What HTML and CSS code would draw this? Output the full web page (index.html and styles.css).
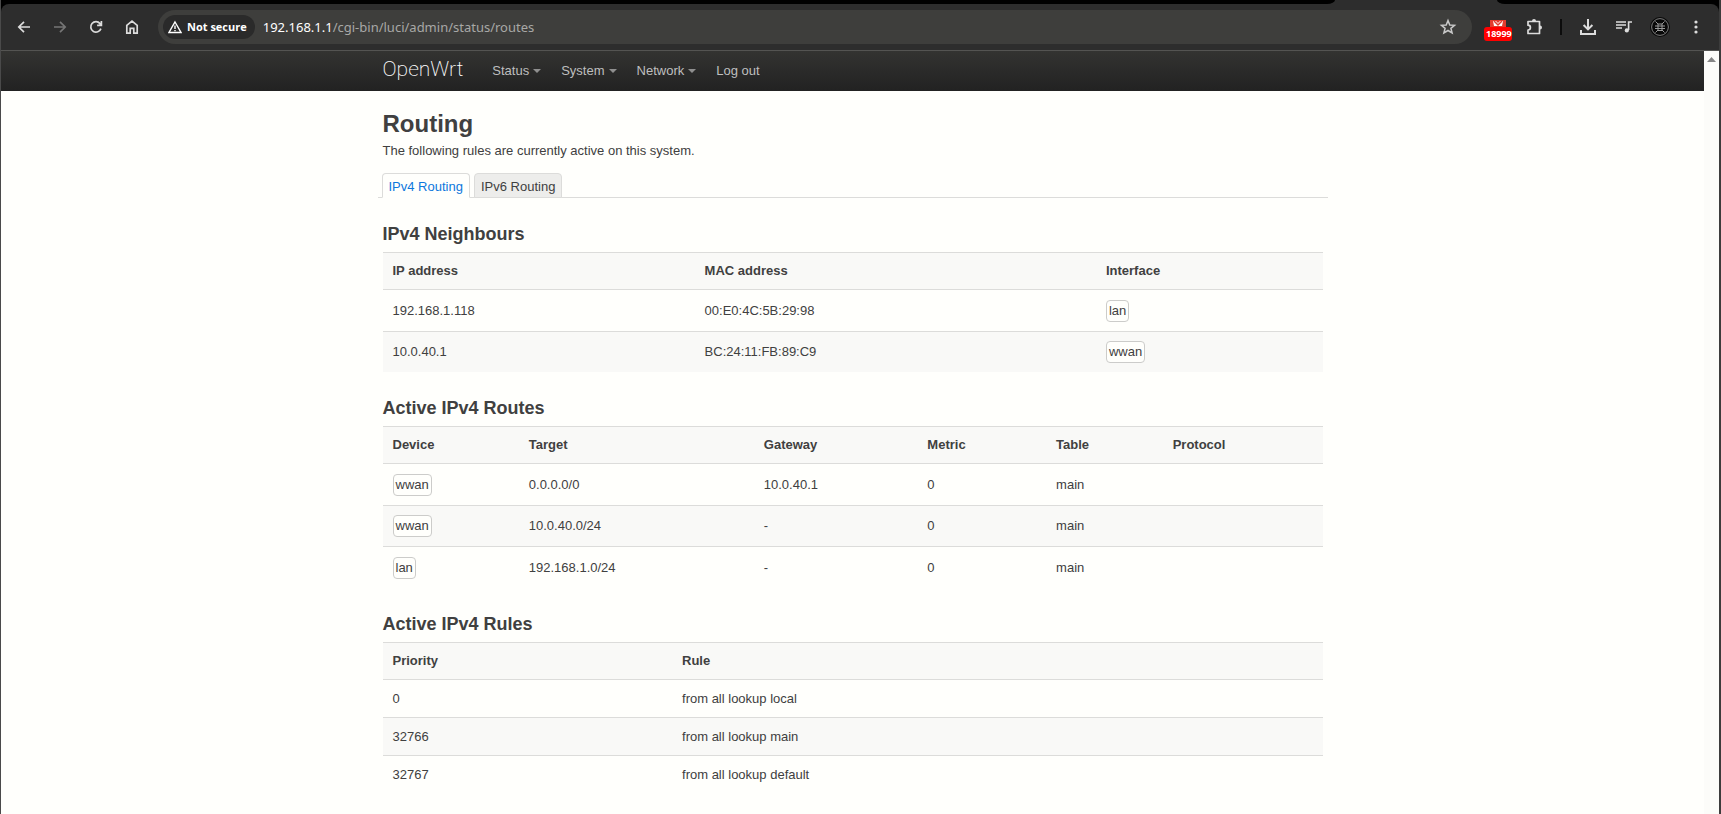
FILE: index.html
```html
<!DOCTYPE html>
<html lang="en">

<head>
    <meta charset="UTF-8">
    <meta name="viewport" content="width=device-width, initial-scale=1.0">
    <title>OpenWrt - Routing - LuCI</title>
    <link rel="stylesheet" href="styles.css">
</head>

<body>
    <div class="window">
        <div class="tabstrip">
            <div class="tabstrip-left"></div>
            <div class="tabstrip-active"></div>
            <div class="tabstrip-right"></div>
        </div>

        <div class="toolbar">
            <button class="tool" aria-label="Back">
                <svg width="16" height="16" viewBox="0 0 16 16" fill="none" stroke="currentColor" stroke-width="1.7"><path d="M14 8H3M8 2.8L2.8 8L8 13.2"/></svg>
            </button>
            <button class="tool tool-dim" aria-label="Forward">
                <svg width="16" height="16" viewBox="0 0 16 16" fill="none" stroke="currentColor" stroke-width="1.7"><path d="M2 8H13M8 2.8L13.2 8L8 13.2"/></svg>
            </button>
            <button class="tool" aria-label="Reload">
                <svg width="16" height="16" viewBox="0 0 16 16" fill="none" stroke="currentColor" stroke-width="1.7"><path d="M12.9 9.6A5.2 5.2 0 1 1 12 4.6L13.4 6.2M13.4 2V6.3H9.1"/></svg>
            </button>
            <button class="tool" aria-label="Home">
                <svg width="16" height="16" viewBox="0 0 16 16" fill="none" stroke="currentColor" stroke-width="1.7"><path d="M2.8 14.2V6.4L8 2.2L13.2 6.4V14.2H9.8V9.4H6.2V14.2Z"/></svg>
            </button>

            <div class="omnibox">
                <button class="chip">
                    <svg width="14" height="14" viewBox="0 0 14 14" fill="none" stroke="currentColor" stroke-width="1.4"><path d="M7 2L13 12.5H1Z"/><path d="M7 5.6V9M7 9.9V11.2"/></svg>
                    Not secure
                </button>
                <a class="url" href="#">192.168.1.1<span class="url-path">/cgi-bin/luci/admin/status/routes</span></a>
                <button class="star" aria-label="Bookmark this page">
                    <svg width="18" height="18" viewBox="0 0 18 18" fill="none" stroke="currentColor" stroke-width="1.5"><path d="M9 2.6L10.8 7L15.5 7.3L11.9 10.3L13.1 15L9 12.5L4.9 15L6.1 10.3L2.5 7.3L7.2 7Z"/></svg>
                </button>
            </div>

            <button class="tool ext" aria-label="Mail checker">
                <svg width="16" height="14" viewBox="0 0 16 14"><path fill="#e33b2e" d="M0 0H16V14H0Z"/><path fill="#fff" d="M3 1H6L8 3L10 1H13L12 6H4Z"/><path fill="none" stroke="#e33b2e" stroke-width="1.5" d="M4 1L8 5L12 1"/></svg>
                <span class="ext-count">18999</span>
            </button>
            <button class="tool" aria-label="Extensions">
                <svg width="18" height="18" viewBox="0 0 18 18" fill="none" stroke="currentColor" stroke-width="1.7"><path d="M3 3.5H14.5V15.5H3V12A2.4 2.4 0 0 0 3 7.2Z" stroke-linejoin="round"/><path fill="currentColor" stroke="none" d="M7 3A2 2 0 0 1 11 3ZM15 7.5A2 2 0 0 1 15 11.5Z"/></svg>
            </button>
            <span class="divider"></span>
            <button class="tool" aria-label="Downloads">
                <svg width="18" height="18" viewBox="0 0 18 18" fill="none" stroke="currentColor" stroke-width="2"><path d="M9 1V11M4.6 7L9 11.4L13.4 7M2 12V16H16V12"/></svg>
            </button>
            <button class="tool" aria-label="Media">
                <svg width="18" height="18" viewBox="0 0 18 18" fill="none" stroke="currentColor" stroke-width="1.6"><path d="M1 4H11M1 7H11M1 10H7M17 4H13.6V12"/><circle cx="11.8" cy="12.4" r="2.1" fill="currentColor" stroke="none"/></svg>
            </button>
            <button class="tool" aria-label="Profile">
                <svg width="20" height="20" viewBox="0 0 20 20" fill="none"><circle cx="10" cy="10" r="10" fill="#080808"/><circle cx="10" cy="10" r="8.4" stroke="#8a8a8a" stroke-width=".9"/><path stroke="#9a9a9a" d="M5.5 4.5L8 7V13L5.5 15.5M14.5 4.5L12 7V13L14.5 15.5M8 7H12M5 9H15M5 11.5H15M8 13.5H12"/></svg>
            </button>
            <button class="tool" aria-label="Menu">
                <svg width="16" height="16" viewBox="0 0 16 16" fill="currentColor"><circle cx="8" cy="3" r="1.6"/><circle cx="8" cy="8" r="1.6"/><circle cx="8" cy="13" r="1.6"/></svg>
            </button>
        </div>

        <div class="viewport">
            <div class="page">
                <header>
                    <div class="container nav-row">
                        <a class="brand" href="#">OpenWrt</a>
                        <nav class="nav">
                            <a class="menu" href="#">Status</a>
                            <a class="menu" href="#">System</a>
                            <a class="menu" href="#">Network</a>
                            <a href="#">Log out</a>
                        </nav>
                    </div>
                </header>

                <main class="container">
                    <h2>Routing</h2>
                    <p class="descr">The following rules are currently active on this system.</p>

                    <ul class="tabmenu">
                        <li class="tab active"><a href="#">IPv4 Routing</a></li>
                        <li class="tab"><a href="#">IPv6 Routing</a></li>
                    </ul>

                    <h3>IPv4 Neighbours</h3>
                    <table class="table neighbours">
                        <thead>
                            <tr><th>IP address</th><th>MAC address</th><th>Interface</th></tr>
                        </thead>
                        <tbody>
                            <tr><td>192.168.1.118</td><td>00:E0:4C:5B:29:98</td><td><span class="ifacebadge">lan</span></td></tr>
                            <tr><td>10.0.40.1</td><td>BC:24:11:FB:89:C9</td><td><span class="ifacebadge">wwan</span></td></tr>
                        </tbody>
                    </table>

                    <h3>Active IPv4 Routes</h3>
                    <table class="table routes">
                        <thead>
                            <tr><th>Device</th><th>Target</th><th>Gateway</th><th>Metric</th><th>Table</th><th>Protocol</th></tr>
                        </thead>
                        <tbody>
                            <tr><td><span class="ifacebadge">wwan</span></td><td>0.0.0.0/0</td><td>10.0.40.1</td><td>0</td><td>main</td><td></td></tr>
                            <tr><td><span class="ifacebadge">wwan</span></td><td>10.0.40.0/24</td><td>-</td><td>0</td><td>main</td><td></td></tr>
                            <tr><td><span class="ifacebadge">lan</span></td><td>192.168.1.0/24</td><td>-</td><td>0</td><td>main</td><td></td></tr>
                        </tbody>
                    </table>

                    <h3>Active IPv4 Rules</h3>
                    <table class="table rules">
                        <thead>
                            <tr><th>Priority</th><th>Rule</th></tr>
                        </thead>
                        <tbody>
                            <tr><td>0</td><td>from all lookup local</td></tr>
                            <tr><td>32766</td><td>from all lookup main</td></tr>
                            <tr><td>32767</td><td>from all lookup default</td></tr>
                        </tbody>
                    </table>
                </main>
            </div>

            <div class="scrollbar">
                <svg width="9" height="5" viewBox="0 0 9 5"><path fill="#858585" d="M4.5 0L9 5H0Z"/></svg>
            </div>
        </div>
    </div>
</body>

</html>
```

FILE: styles.css
```css
* {
    box-sizing: border-box;
}

body {
    margin: 0;
    background: #000;
    color: #404040;
    font: 13px/18px "Liberation Sans", Arial, sans-serif;
}

a {
    color: inherit;
    text-decoration: none;
}

button {
    padding: 0;
    border: 0;
    background: none;
    color: inherit;
    font: inherit;
}

svg {
    display: block;
}

/* Browser window */
.window {
    display: flex;
    flex-direction: column;
    height: 100vh;
    overflow: hidden;
    border-left: 1px solid #4a4a4a;
    border-right: 2px solid #3c3c3c;
}

.tabstrip {
    display: flex;
    height: 4px;
    background: #2d2d2d;
}

.tabstrip-left,
.tabstrip-right {
    background: #000;
}

.tabstrip-left {
    flex: 1;
    border-bottom-right-radius: 8px 4px;
}

.tabstrip-active {
    width: 162px;
}

.tabstrip-right {
    width: 222px;
    border-bottom-left-radius: 8px 4px;
}

.toolbar {
    display: flex;
    align-items: center;
    height: 47px;
    padding: 0 5px;
    border-bottom: 1px solid #545452;
    border-radius: 8px 8px 0 0;
    background: #2d2d2d;
    color: #dcdcdc;
}

.tool {
    display: flex;
    flex: none;
    align-items: center;
    justify-content: center;
    width: 36px;
    height: 34px;
}

.tool-dim {
    color: #757575;
}

.omnibox {
    display: flex;
    flex: 1;
    align-items: center;
    height: 34px;
    margin: 0 8px;
    padding: 0 15px 0 5px;
    border-radius: 17px;
    background: #3e3e3c;
}

.chip {
    display: flex;
    align-items: center;
    gap: 5px;
    height: 24px;
    padding: 0 8px 0 5px;
    border-radius: 12px;
    background: #2a2a2a;
    color: #fff;
    font: bold 11px/24px "Open Sans", sans-serif;
}

.url {
    flex: 1;
    padding-left: 8px;
    color: #fff;
    font: 13px/24px "Noto Sans", sans-serif;
}

.url-path {
    color: #a8a8a6;
}

.star {
    color: #c8c8c8;
}

.ext {
    position: relative;
}

.ext-count {
    position: absolute;
    top: 17px;
    left: 4px;
    width: 28px;
    height: 14px;
    padding-left: 2px;
    overflow: hidden;
    border-radius: 3px;
    background: #f00;
    color: #fff;
    font: bold 9px/14px "Open Sans", sans-serif;
    text-align: left;
}

.divider {
    width: 2px;
    height: 16px;
    margin: 0 8px;
    background: #0c0c0c;
}

.viewport {
    display: flex;
    flex: 1;
    min-height: 0;
    background: #fffffc;
}

.page {
    flex: 1;
}

.scrollbar {
    width: 15px;
    padding: 6px 3px;
    background: #fcfcf9;
}

/* LuCI page */
.container {
    width: 940px;
    max-width: 100%;
    margin: 0 auto;
}

header {
    height: 40px;
    background: linear-gradient(#333331, #222);
}

.nav-row {
    display: flex;
    align-items: center;
    height: 40px;
}

.brand {
    padding: 0 19px 4px 0;
    color: #fff;
    font: 200 21px/36px Roboto, sans-serif;
}

.nav {
    display: flex;
}

.nav a {
    padding: 0 10px;
    color: #bfbfbf;
}

.menu::after {
    content: "";
    display: inline-block;
    margin-left: 4px;
    border: 4px solid transparent;
    border-top-color: #8f8f8f;
    border-bottom: 0;
    vertical-align: 2px;
}

h2,
h3 {
    margin: 0;
    line-height: 36px;
}

h2 {
    padding-top: 15px;
    font-size: 24px;
}

h3 {
    font-size: 18px;
}

.descr {
    margin: 0;
}

.tabmenu {
    display: flex;
    gap: 4px;
    margin: 13px -5px 18px;
    padding: 0 4px;
    border-bottom: 1px solid #dcdcda;
    list-style: none;
}

.tab {
    height: 25px;
    margin-bottom: -1px;
    padding: 0 6px;
    border: 1px solid #dcdcda;
    border-radius: 4px 4px 0 0;
    background: #ededeb;
    line-height: 25px;
}

.tab.active {
    border-bottom-color: #fffffc;
    background: #fffffc;
    color: #0d78dc;
}

.table {
    width: 100%;
    margin-bottom: 18px;
    border-collapse: separate;
    border-spacing: 0;
    table-layout: fixed;
}

.table th,
.table td {
    height: 42px;
    padding: 0 10px;
    border-top: 1px solid #dcdcda;
    text-align: left;
    vertical-align: middle;
}

.table th {
    height: 37px;
    background: #f9f9f7;
}

.table tr:nth-child(even) td {
    height: 41px;
    background: #f9f9f7;
}

.rules td,
.rules tr:nth-child(even) td {
    height: 38px;
}

.neighbours th:nth-child(1) { width: 33.2%; }
.neighbours th:nth-child(2) { width: 42.7%; }

.routes th:nth-child(1) { width: 14.5%; }
.routes th:nth-child(2) { width: 25%; }
.routes th:nth-child(3) { width: 17.4%; }
.routes th:nth-child(4) { width: 13.7%; }
.routes th:nth-child(5) { width: 12.4%; }

.rules th:nth-child(1) { width: 30.8%; }

.ifacebadge {
    display: inline-block;
    padding: 1px 2px;
    border: 1px solid #ccccca;
    border-radius: 4px;
    background: #fffffc;
    vertical-align: middle;
}
```
